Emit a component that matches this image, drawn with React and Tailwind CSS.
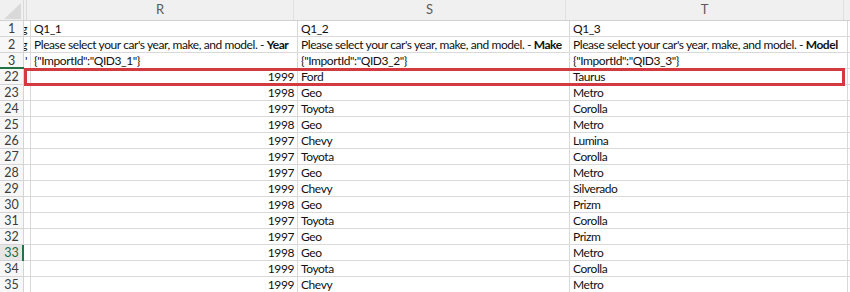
import React from "react";

const rows = [
  { n: 22, year: "1999", make: "Ford", model: "Taurus" },
  { n: 23, year: "1998", make: "Geo", model: "Metro" },
  { n: 24, year: "1997", make: "Toyota", model: "Corolla" },
  { n: 25, year: "1998", make: "Geo", model: "Metro" },
  { n: 26, year: "1997", make: "Chevy", model: "Lumina" },
  { n: 27, year: "1997", make: "Toyota", model: "Corolla" },
  { n: 28, year: "1997", make: "Geo", model: "Metro" },
  { n: 29, year: "1999", make: "Chevy", model: "Silverado" },
  { n: 30, year: "1998", make: "Geo", model: "Prizm" },
  { n: 31, year: "1997", make: "Toyota", model: "Corolla" },
  { n: 32, year: "1997", make: "Geo", model: "Prizm" },
  { n: 33, year: "1998", make: "Geo", model: "Metro" },
  { n: 34, year: "1999", make: "Toyota", model: "Corolla" },
  { n: 35, year: "1999", make: "Chevy", model: "Metro" },
];

const cell =
  "h-[16px] shrink-0 border-r border-b border-[#d9d9d9] px-[3px] leading-[15px] text-[12px] tracking-[-0.42px] whitespace-nowrap overflow-hidden";

const Row = ({ n, q, r, s, t, rRight, active, greenTop }) => (
  <div className="flex">
    <div
      className={`relative h-[16px] w-[24px] shrink-0 border-r border-b border-[#d4d4d4] text-center leading-[15px] text-[12.5px] ${
        active ? "bg-[#e6e6e6] text-[#1d6b3d]" : "bg-[#f7f7f7] text-[#3c3c3c]"
      }`}
    >
      {n}
      {active && <div className="absolute right-[-1px] top-0 h-[16px] w-[2px] bg-[#217346]" />}
      {greenTop && <div className="absolute left-0 bottom-[-1px] h-[2px] w-[24px] bg-[#217346]" />}
    </div>
    <div className={`${cell} w-[3px] px-0 flex justify-end`}>{q}</div>
    <div className={`${cell} w-[267px] ${rRight ? "text-right" : ""}`}>{r}</div>
    <div className={`${cell} w-[272px]`}>{s}</div>
    <div className={`${cell} w-[278px]`}>{t}</div>
    <div className={`${cell} flex-1 border-r-0`} />
  </div>
);

const App = () => {
  return (
    <div
      className="relative w-[850px] h-[292px] overflow-hidden bg-white text-[#111]"
      style={{ fontFamily: "Lato, 'Liberation Sans', sans-serif" }}
    >
      {/* column headers */}
      <div className="flex h-[21px] bg-[#f0f0f0] text-[#5a5a5a] text-[13px] border-b border-[#d0d0d0]">
        <div className="relative w-[24px] shrink-0 border-r border-[#dadada]">
          <svg className="absolute left-[4px] top-[3px]" width="17" height="16" viewBox="0 0 17 16">
            <polygon points="0,16 17,16 17,0" fill="#d9d9d9" />
          </svg>
        </div>
        <div className="w-[3px] shrink-0 border-r border-[#dadada]" />
        <div className="w-[267px] shrink-0 border-r border-[#e0e0e0] flex items-center justify-center">R</div>
        <div className="w-[272px] shrink-0 border-r border-[#e0e0e0] flex items-center justify-center">S</div>
        <div className="w-[278px] shrink-0 border-r border-[#e0e0e0] flex items-center justify-center">T</div>
        <div className="flex-1" />
      </div>

      <Row n={1} q="g" r="Q1_1" s="Q1_2" t="Q1_3" />
      <Row
        n={2}
        q="g"
        r={<>Please select your car's year, make, and model. - <b>Year</b></>}
        s={<>Please select your car's year, make, and model. - <b>Make</b></>}
        t={<>Please select your car's year, make, and model. - <b>Model</b></>}
      />
      <Row n={3} q="'" r={'{"ImportId":"QID3_1"}'} s={'{"ImportId":"QID3_2"}'} t={'{"ImportId":"QID3_3"}'} greenTop />
      {rows.map((row) => (
        <Row key={row.n} n={row.n} r={row.year} rRight s={row.make} t={row.model} active={row.n === 33} />
      ))}

      {/* highlighted row */}
      <div className="absolute left-[24px] top-[68px] w-[821px] h-[18px] border-[3px] border-[#d23a40] pointer-events-none" />
    </div>
  );
};

export default App;
